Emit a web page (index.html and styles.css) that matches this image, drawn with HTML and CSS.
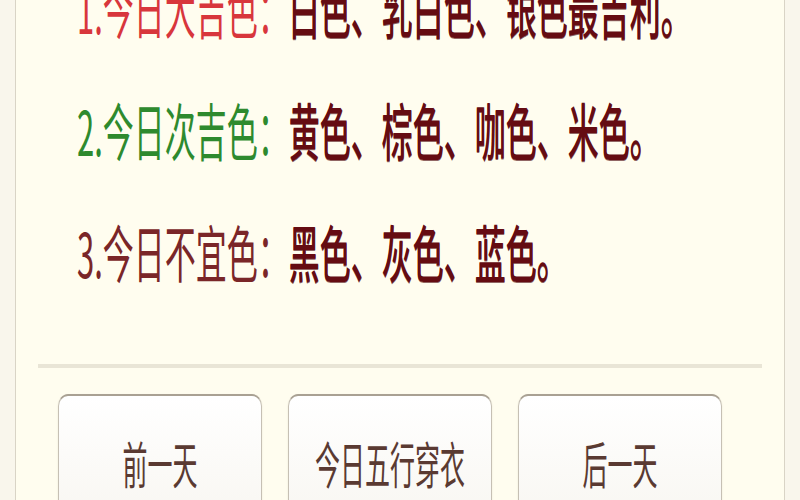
FILE: index.html
```html
<!DOCTYPE html>
<html lang="zh-CN">
<head>
<meta charset="utf-8">
<title>今日五行穿衣</title>
<link rel="stylesheet" href="styles.css">
</head>
<body>
<div class="stage">
  <div class="card">
    <ul class="colors">
      <li><span class="label lucky">1.今日大吉色：</span><span class="value">白色、乳白色、银色最吉利。</span></li>
      <li><span class="label fair">2.今日次吉色：</span><span class="value">黄色、棕色、咖色、米色。</span></li>
      <li><span class="label avoid">3.今日不宜色：</span><span class="value">黑色、灰色、蓝色。</span></li>
    </ul>
    <div class="divider"></div>
    <div class="actions">
      <button class="btn" type="button">前一天</button>
      <button class="btn" type="button">今日五行穿衣</button>
      <button class="btn" type="button">后一天</button>
    </div>
  </div>
</div>
</body>
</html>
```

FILE: styles.css
```css
html, body {
  margin: 0;
  padding: 0;
  width: 800px;
  height: 500px;
  overflow: hidden;
  background: #f9f6ec;
  font-family: "Noto Sans CJK SC", "Noto Sans", sans-serif;
}

/* the mobile page is drawn tall and narrow */
.stage {
  width: 800px;
  height: 250px;
  transform: scaleY(2);
  transform-origin: 0 0;
}

.card {
  box-sizing: border-box;
  height: 100%;
  margin: 0 15px;
  padding: 0 22px;
  background: #fffdef;
  border-left: 1px solid #d9d4c6;
  border-right: 1px solid #d9d4c6;
  overflow: hidden;
}

.colors {
  list-style: none;
  margin: -27px 0 0;
  padding: 0 0 0 39px;
  font-size: 31px;
  line-height: 61px;
  white-space: nowrap;
}

.label { font-weight: 400; }
.lucky { color: #d8363c; }
.fair  { color: #2e8a2e; }
.avoid { color: #7a2628; }

.value {
  color: #650c12;
  font-weight: 500;
  text-shadow: 0 0.5px 0 rgba(70, 0, 5, 0.6);
}

.divider {
  height: 2px;
  margin-top: 26px;
  background: #e9e5d6;
}

.actions {
  display: flex;
  gap: 26px;
  margin-top: 13px;
  padding-left: 20px;
}

.btn {
  width: 204px;
  height: 68px;
  display: flex;
  align-items: center;
  justify-content: center;
  padding: 0;
  border: 1px solid #c6c0b4;
  border-top-color: #a9a193;
  border-radius: 10px / 6px;
  background: linear-gradient(#ffffff, #f8f6f1);
  box-shadow: 0 0.5px 1px rgba(120, 110, 90, 0.25);
  color: #5a3a32;
  font-family: inherit;
  font-size: 25px;
  font-weight: 400;
}
```
